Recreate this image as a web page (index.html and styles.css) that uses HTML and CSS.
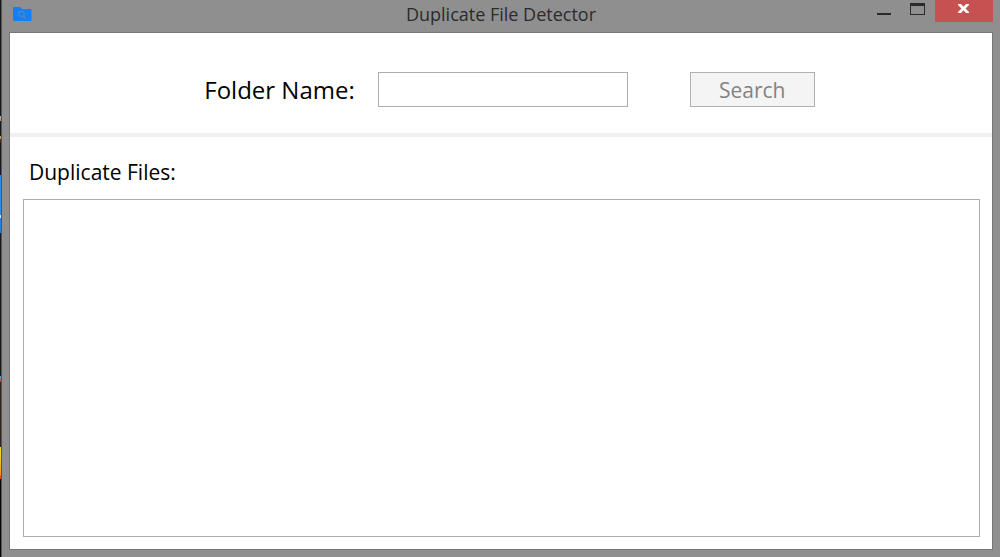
FILE: index.html
```html
<!DOCTYPE html>
<html lang="en">
<head>
<meta charset="utf-8">
<meta name="viewport" content="width=device-width, initial-scale=1">
<title>Duplicate File Detector</title>
<link rel="stylesheet" href="styles.css">
</head>
<body>
<div class="desktop">
  <div class="window">
    <header class="titlebar">
      <svg class="app-icon" width="20" height="16" viewBox="0 0 20 16" aria-hidden="true">
        <path d="M0 1.500Q0 1 .5 1H7L9 3H18Q18.500 3 18.500 3.500V14.500Q18.500 15 18 15H.5Q0 15 0 14.500Z" fill="#1380fb"/>
        <circle cx="8.500" cy="8" r="2.700" fill="none" stroke="#5585b5" stroke-width="1.200"/>
        <path d="M10.500 10L13 12.800" stroke="#5585b5" stroke-width="1.500"/>
      </svg>
      <h1 class="title">Duplicate File Detector</h1>
      <div class="controls">
        <button class="control" type="button" aria-label="Minimize">
          <svg width="14" height="12" viewBox="0 0 14 12"><path d="M0 10H14V12H0Z" fill="#2b2b2b"/></svg>
        </button>
        <button class="control" type="button" aria-label="Maximize">
          <svg width="16" height="12" viewBox="0 0 16 12"><path d="M0 0H15V12H0ZM1 3V11H14V3Z" fill="#2b2b2b" fill-rule="evenodd"/></svg>
        </button>
        <button class="control control-close" type="button" aria-label="Close">
          <svg width="12" height="10" viewBox="0 0 12 10"><path d="M0 0H3L5.500 2.700L8 0H11V1L7.500 4.500L11 8V9H8L5.500 6.300L3 9H0V8L3.500 4.500L0 1Z" fill="#fff"/></svg>
        </button>
      </div>
    </header>
    <main class="client">
      <form class="search">
        <label class="search-label" for="folder">Folder Name:</label>
        <input class="search-input" id="folder" type="text">
        <button class="search-button" type="button" disabled>Search</button>
      </form>
      <section class="results">
        <label class="results-label" for="files">Duplicate Files:</label>
        <textarea class="results-list" id="files" readonly></textarea>
      </section>
    </main>
  </div>
</div>
</body>
</html>
```
FILE: styles.css
```css
* {
  box-sizing: border-box;
}

body {
  margin: 0;
  font-family: "Open Sans", "Noto Sans", sans-serif;
  color: #000;
}

.desktop {
  min-height: 100vh;
  display: flex;
  padding-left: 1px;
  background: linear-gradient(#17191f 0 116px, #7fb8d8 116px 118px, #d88a35 118px 121px, #17191f 121px 136px, #b8a060 136px 139px, #6b1c18 139px 142px, #17191f 142px 175px, #2b8ff0 175px 215px, #ddeaf8 215px 218px, #1f83e6 218px 233px, #17191f 233px 376px, #4d9ad8 376px 379px, #c84a35 379px 382px, #2d241e 382px 447px, #f0d427 447px 455px, #ee9815 475px, #f04a20 476px 479px, #050505 479px);
}

.window {
  flex: 1;
  display: flex;
  flex-direction: column;
  padding: 0 7px 7px;
  border-left: 1px solid #555;
  background: #8f8f8f;
}

.titlebar {
  display: grid;
  grid-template-columns: 1fr auto 1fr;
  height: 32px;
}

.app-icon {
  margin: 6px 0 0 4px;
}

.title {
  margin: 0;
  font-size: 18px;
  font-weight: 400;
  line-height: 28px;
  color: #2b2b2b;
}

.controls {
  display: flex;
  justify-content: flex-end;
}

.control {
  display: flex;
  justify-content: center;
  width: 34px;
  height: 22px;
  padding: 3px 0 0;
  border: 0;
  background: none;
}

.control-close {
  width: 58px;
  padding-top: 4px;
  background: #c75050;
}

.client {
  flex: 1;
  display: flex;
  flex-direction: column;
  border: 1px solid #777;
  background: #fff;
}

.search {
  display: flex;
  justify-content: center;
  align-items: center;
  padding: 39px 0 26px 17px;
  border-bottom: 4px solid #f0f0f0;
}

.search-label {
  font-size: 24px;
  line-height: 35px;
}

.search-input {
  width: 250px;
  height: 35px;
  margin: 0 62px 0 23px;
  padding: 0 6px;
  border: 1px solid #abadb3;
  font: inherit;
  font-size: 21px;
}

.search-button {
  width: 125px;
  height: 35px;
  padding: 0;
  border: 1px solid #adb2b5;
  background: #f4f4f4;
  color: #838383;
  font: inherit;
  font-size: 21px;
  line-height: 35px;
}

.results {
  flex: 1;
  display: flex;
  flex-direction: column;
  padding: 19px 12px 12px 13px;
}

.results-label {
  margin: 0 0 11px 6px;
  font-size: 21px;
  line-height: 32px;
}

.results-list {
  flex: 1;
  width: 100%;
  padding: 6px;
  border: 1px solid #abadb3;
  resize: none;
  font: inherit;
  font-size: 18px;
}
```
